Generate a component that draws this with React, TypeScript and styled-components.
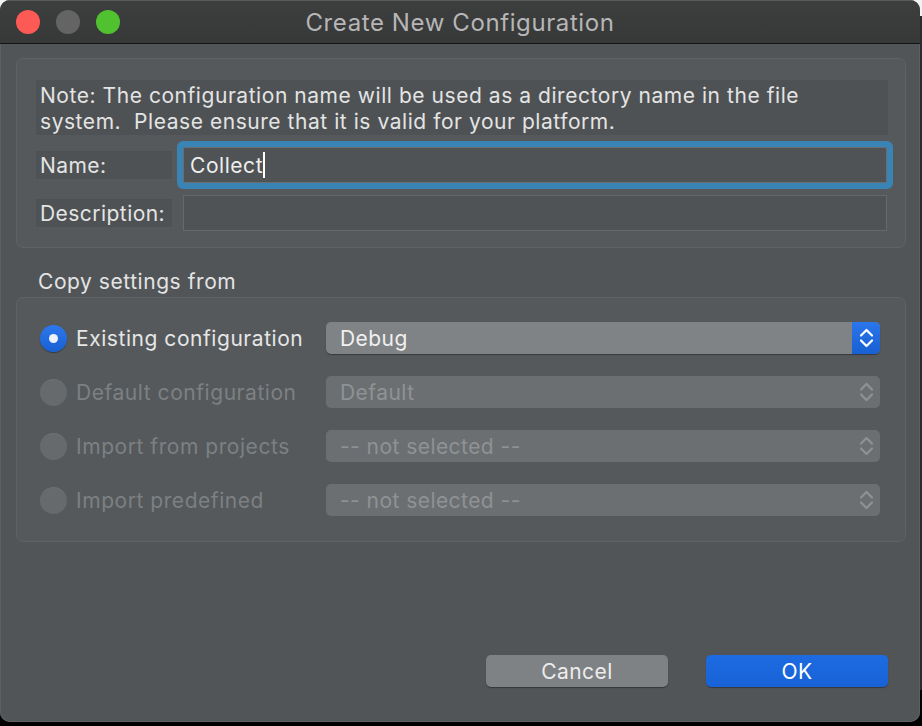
import React from "react";
import styled, { createGlobalStyle } from "styled-components";

const Global = createGlobalStyle`
  html, body { margin: 0; padding: 0; }
  body {
    width: 922px;
    height: 726px;
    overflow: hidden;
    background: linear-gradient(#f2f2f2 0 16px, #2a2b2c 16px 690px, #000 690px);
    font-family: Inter, "Noto Sans", "Liberation Sans", sans-serif;
  }
`;

const Window = styled.div`
  width: 920px;
  height: 722px;
  border-radius: 10px;
  overflow: hidden;
  background: #515558;
  display: flex;
  flex-direction: column;
  box-shadow: inset 0 0 0 1px #5e6164;
`;

const TitleBar = styled.div`
  flex: none;
  display: grid;
  grid-template-columns: 1fr auto 1fr;
  align-items: center;
  background: linear-gradient(#3d3e3e, #373838);
  border-bottom: 1px solid #141414;
  border-top: 1px solid #5a5a5a;
  box-sizing: border-box;
  height: 44px;
`;

const Lights = styled.div`
  display: flex;
  gap: 16px;
  padding-left: 16px;
`;

const Light = styled.span<{ $c: string }>`
  width: 24px;
  height: 24px;
  border-radius: 50%;
  background: ${(p) => p.$c};
`;

const Title = styled.div`
  color: #b6b6b6;
  font-size: 24px;
  letter-spacing: 0.6px;
`;

const Body = styled.div`
  flex: 1;
  display: flex;
  flex-direction: column;
  padding: 14px 14px 0 16px;
  font-size: 21px;
  letter-spacing: 0.55px;
`;

const Group = styled.div<{ $pt: number; $pb: number; $pr: number }>`
  border: 1px solid #5f6366;
  border-radius: 7px;
  background: #55595b;
  padding: ${(p) => p.$pt}px ${(p) => p.$pr}px ${(p) => p.$pb}px 19px;
`;

const Note = styled.div`
  background: #4e5254;
  color: #e4e4e4;
  line-height: 26px;
  padding: 3px 4px 0 4px;
  margin-bottom: 12px;
  white-space: nowrap;
`;

const FormGrid = styled.div`
  display: grid;
  grid-template-columns: 136px 1fr;
  column-gap: 11px;
  row-gap: 12px;
  align-items: center;
`;

const LabelCell = styled.div`
  background: #4e5254;
  color: #e4e4e4;
  height: 28px;
  line-height: 29px;
  padding-left: 4px;
  letter-spacing: 0.45px;
`;

const Input = styled.div<{ $focus?: boolean }>`
  height: 36px;
  box-sizing: border-box;
  border: 1px solid ${(p) => (p.$focus ? "#6a6e71" : "#66696c")};
  background: #4f5355;
  color: #eeeeee;
  display: flex;
  align-items: center;
  padding-left: 6px;
  margin-right: 1px;
  box-shadow: ${(p) => (p.$focus ? "0 0 0 6px #3a83b5" : "none")};
  border-radius: ${(p) => (p.$focus ? "2px" : "0")};
`;

const Caret = styled.span`
  display: inline-block;
  width: 2px;
  height: 26px;
  background: #ffffff;
`;

const SectionLabel = styled.div`
  color: #e4e4e4;
  line-height: 26px;
  padding: 21px 0 2px 22px;
`;

const OptionGrid = styled.div`
  display: grid;
  grid-template-columns: 290px 1fr;
  row-gap: 22px;
  align-items: center;
`;

const RadioLabel = styled.label<{ $disabled?: boolean }>`
  display: flex;
  align-items: center;
  gap: 9px;
  padding-left: 4px;
  line-height: 30px;
  padding-top: 2px;
  color: ${(p) => (p.$disabled ? "#7d8083" : "#e6e6e6")};
`;

const RadioDot = styled.span<{ $on?: boolean }>`
  width: 27px;
  height: 27px;
  flex: none;
  margin-top: -2px;
  border-radius: 50%;
  display: flex;
  align-items: center;
  justify-content: center;
  background: ${(p) =>
    p.$on ? "linear-gradient(#2c78ec, #1860d2)" : "#666a6d"};
  box-shadow: ${(p) =>
    p.$on ? "0 1px 1px rgba(0,0,0,0.35)" : "inset 0 1px 0 rgba(255,255,255,0.05)"};
  &::after {
    content: "";
    width: 9px;
    height: 9px;
    border-radius: 50%;
    background: ${(p) => (p.$on ? "#eef3fb" : "transparent")};
  }
`;

const Select = styled.div<{ $disabled?: boolean }>`
  height: 32px;
  border-radius: 5px;
  display: flex;
  align-items: center;
  overflow: hidden;
  letter-spacing: 0.45px;
  background: ${(p) => (p.$disabled ? "#6b6f71" : "#808385")};
  color: ${(p) => (p.$disabled ? "#8f9295" : "#f0f0f0")};
  box-shadow: ${(p) =>
    p.$disabled ? "none" : "0 1px 1px rgba(0,0,0,0.35)"};
`;

const SelectText = styled.span`
  flex: 1;
  padding-left: 14px;
`;

const Stepper = styled.span<{ $active?: boolean }>`
  width: 28px;
  align-self: stretch;
  display: flex;
  align-items: center;
  justify-content: center;
  background: ${(p) => (p.$active ? "linear-gradient(#2a76ea, #1860d4)" : "transparent")};
  color: ${(p) => (p.$active ? "#ffffff" : "#8f9294")};
`;

const Footer = styled.div`
  margin-top: auto;
  display: flex;
  justify-content: flex-end;
  gap: 38px;
  padding: 0 18px 35px 0;
`;

const Button = styled.button<{ $primary?: boolean }>`
  width: 182px;
  height: 32px;
  border: none;
  border-radius: 5px;
  font-family: inherit;
  font-size: 21px;
  letter-spacing: 0.45px;
  color: ${(p) => (p.$primary ? "#ffffff" : "#ececec")};
  background: ${(p) =>
    p.$primary ? "linear-gradient(#1d6be2, #1862d6)" : "#7f8284"};
  box-shadow: 0 1px 1px rgba(0, 0, 0, 0.35);
  padding: 0;
`;

const Chevrons = () => (
  <svg width="15" height="22" viewBox="0 0 15 22" fill="none">
    <path
      d="M2 8.5 L7.5 3 L13 8.5 M2 13.5 L7.5 19 L13 13.5"
      stroke="currentColor"
      strokeWidth="2.2"
      strokeLinecap="round"
      strokeLinejoin="round"
    />
  </svg>
);

const options = [
  { label: "Existing configuration", value: "Debug", on: true },
  { label: "Default configuration", value: "Default", on: false },
  { label: "Import from projects", value: "-- not selected --", on: false },
  { label: "Import predefined", value: "-- not selected --", on: false },
];

export default function App() {
  return (
    <>
      <Global />
      <Window>
        <TitleBar>
          <Lights>
            <Light $c="#fd5a55" />
            <Light $c="#646464" />
            <Light $c="#50c22f" />
          </Lights>
          <Title>Create New Configuration</Title>
          <div />
        </TitleBar>
        <Body>
          <Group $pt={21} $pb={16} $pr={17}>
            <Note>
              Note: The configuration name will be used as a directory name in the file
              <br />
              system.&nbsp; Please ensure that it is valid for your platform.
            </Note>
            <FormGrid>
              <LabelCell>Name:</LabelCell>
              <Input $focus>
                Collect
                <Caret />
              </Input>
              <LabelCell>Description:</LabelCell>
              <Input />
            </FormGrid>
          </Group>
          <SectionLabel>Copy settings from</SectionLabel>
          <Group $pt={24} $pb={25} $pr={25}>
            <OptionGrid>
              {options.map((o) => (
                <React.Fragment key={o.label}>
                  <RadioLabel $disabled={!o.on}>
                    <RadioDot $on={o.on} />
                    {o.label}
                  </RadioLabel>
                  <Select $disabled={!o.on}>
                    <SelectText>{o.value}</SelectText>
                    <Stepper $active={o.on}>
                      <Chevrons />
                    </Stepper>
                  </Select>
                </React.Fragment>
              ))}
            </OptionGrid>
          </Group>
          <Footer>
            <Button>Cancel</Button>
            <Button $primary>OK</Button>
          </Footer>
        </Body>
      </Window>
    </>
  );
}
